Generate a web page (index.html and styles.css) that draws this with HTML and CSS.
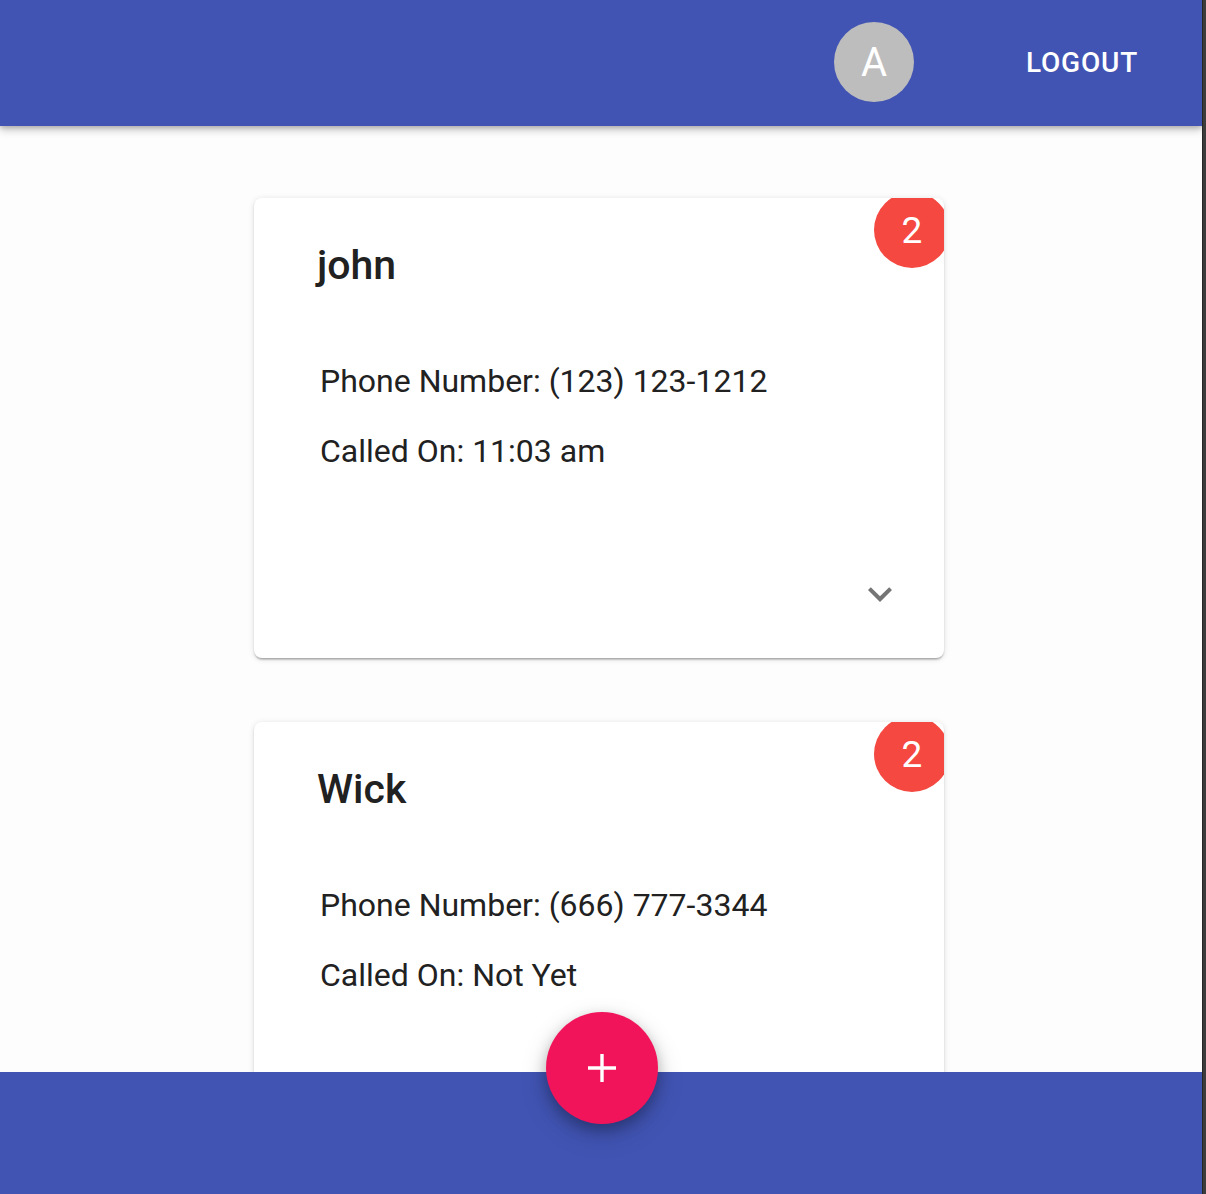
FILE: index.html
```html
<!DOCTYPE html>
<html>
<head>
<meta charset="utf-8">
<link rel="stylesheet" href="styles.css">
</head>
<body>
<div class="page">
  <div class="app">
    <header class="topbar">
      <div class="avatar">A</div>
      <div class="logout">LOGOUT</div>
    </header>
    <main class="list">
      <section class="card">
        <span class="badge">2</span>
        <h2 class="name">john</h2>
        <div class="info">
          <p class="line">Phone Number: (123) 123-1212</p>
          <p class="line">Called On: 11:03 am</p>
        </div>
        <div class="actions">
          <svg class="chev" viewBox="0 0 24 24" width="48" height="48"><path d="M7.41 8.59 12 13.17l4.59-4.58L18 10l-6 6-6-6z" fill="#757575"/></svg>
        </div>
      </section>
      <section class="card">
        <span class="badge">2</span>
        <h2 class="name">Wick</h2>
        <div class="info">
          <p class="line">Phone Number: (666) 777-3344</p>
          <p class="line">Called On: Not Yet</p>
        </div>
        <div class="actions"></div>
      </section>
    </main>
    <footer class="bottombar">
      <button class="fab" aria-label="add">
        <svg viewBox="0 0 28 28" width="28" height="28"><path d="M12.3 0h3.4v28h-3.4zM0 12.3h28v3.4H0z" fill="#fff"/></svg>
      </button>
    </footer>
  </div>
  <div class="edge"></div>
</div>
</body>
</html>
```
FILE: styles.css
```css
html, body {
  margin: 0;
  padding: 0;
  height: 100%;
  overflow: hidden;
}
body {
  font-family: Roboto, "Noto Sans", Arial, sans-serif;
  background: #3a3a3a;
}
.page {
  display: flex;
  height: 1194px;
}
.app {
  width: 1202px;
  background: #fdfdfd;
  position: relative;
  overflow: hidden;
}
.edge {
  flex: 1;
  background: #3c3c3c;
  border-left: 1px solid #262626;
}
.topbar {
  height: 126px;
  background: #4154b3;
  display: flex;
  align-items: center;
  justify-content: flex-end;
  box-shadow: 0 4px 8px rgba(0,0,0,0.22), 0 2px 4px rgba(0,0,0,0.14);
  position: relative;
  z-index: 2;
}
.avatar {
  width: 80px;
  height: 80px;
  border-radius: 50%;
  background: #bdbdbd;
  color: #fff;
  display: flex;
  align-items: center;
  justify-content: center;
  font-size: 40px;
  margin-right: 112px;
  margin-bottom: 2px;
}
.logout {
  color: #fff;
  font-size: 28px;
  font-weight: 500;
  letter-spacing: 0.8px;
  margin-right: 64px;
  margin-bottom: 2px;
}
.list {
  padding: 72px 0 0 254px;
  display: flex;
  flex-direction: column;
  gap: 64px;
}
.card {
  width: 690px;
  background: #fff;
  border-radius: 8px;
  box-shadow: 0 2px 2px rgba(0,0,0,0.14), 0 1px 6px rgba(0,0,0,0.12), 0 3px 2px -2px rgba(0,0,0,0.2);
  position: relative;
  overflow: hidden;
  height: 460px;
  box-sizing: border-box;
  padding: 38px 0 0 63px;
  display: flex;
  flex-direction: column;
}
.badge {
  position: absolute;
  top: -6px;
  right: -6px;
  width: 76px;
  height: 76px;
  border-radius: 50%;
  background: #f44840;
  color: #fff;
  font-size: 37px;
  display: flex;
  align-items: center;
  justify-content: center;
}
.name {
  margin: 0;
  font-size: 41px;
  font-weight: 500;
  color: #212121;
  line-height: 58px;
}
.info {
  padding: 68px 0 0 3px;
}
.line {
  margin: 0 0 32px;
  font-size: 32px;
  line-height: 38px;
  color: #212121;
}
.actions {
  flex: 1;
  display: flex;
  align-items: flex-end;
  justify-content: flex-end;
  padding: 0 40px 40px 0;
}
.bottombar {
  position: absolute;
  left: 0;
  right: 0;
  bottom: 0;
  height: 122px;
  background: #4154b3;
  z-index: 3;
}
.fab {
  position: absolute;
  left: 546px;
  top: -60px;
  width: 112px;
  height: 112px;
  border-radius: 50%;
  border: none;
  background: #f2145b;
  display: flex;
  align-items: center;
  justify-content: center;
  box-shadow: 0 6px 14px rgba(0,0,0,0.25), 0 10px 28px rgba(0,0,0,0.16);
  padding: 0;
}
```
